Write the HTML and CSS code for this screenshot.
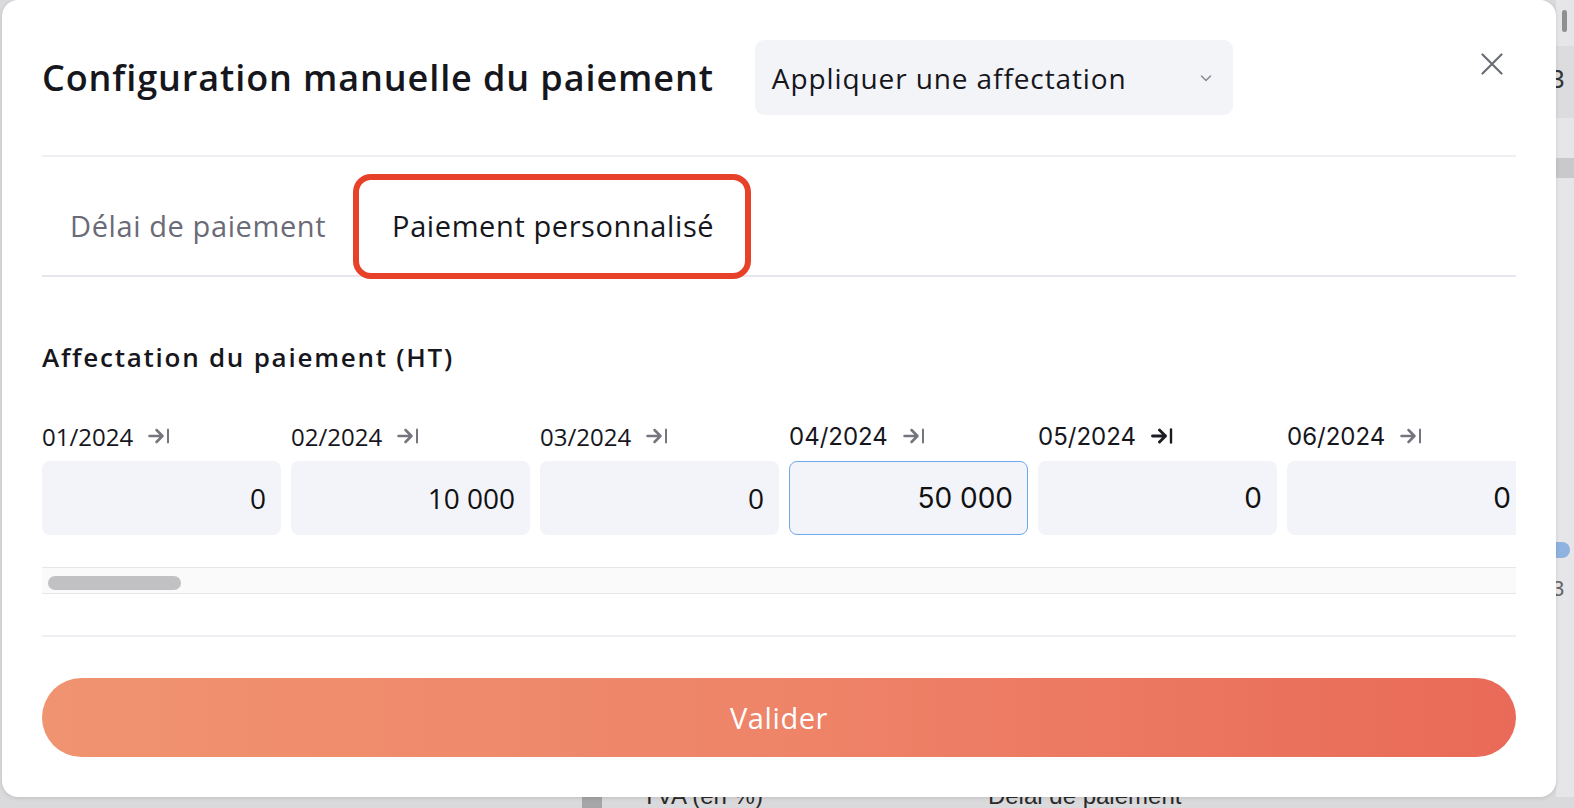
FILE: index.html
```html
<!DOCTYPE html>
<html lang="fr">
<head>
<meta charset="utf-8">
<title>Configuration manuelle du paiement</title>
<link rel="stylesheet" href="styles.css">
</head>
<body>
<div class="page">
  <div class="page-side">
    <div class="side-thumb"></div>
    <div class="side-band"><span>3</span></div>
    <div class="side-band2"></div>
    <div class="side-dot"></div>
    <div class="side-digit">3</div>
  </div>
  <div class="page-bottom">
    <div class="pb-square"></div>
    <span class="pb-label pb-tva">TVA (en %)</span>
    <span class="pb-label pb-delai">Délai de paiement</span>
  </div>
</div>

<div class="modal">
  <div class="modal-header">
    <h1 class="modal-title">Configuration manuelle du paiement</h1>
    <div class="select">
      <span class="select-text">Appliquer une affectation</span>
      <svg class="select-chevron" width="14" height="14" viewBox="0 0 14 14"><polyline points="2.5,5 7,9.5 11.5,5" fill="none" stroke="#8a8d96" stroke-width="1.6" stroke-linecap="round" stroke-linejoin="round"/></svg>
    </div>
    <button class="close" aria-label="Fermer">
      <svg width="22" height="22" viewBox="0 0 22 22"><path d="M1.5 1.5 L20.5 20.5 M20.5 1.5 L1.5 20.5" stroke="#6b6e76" stroke-width="2.2" stroke-linecap="round"/></svg>
    </button>
  </div>
  <div class="divider"></div>

  <div class="tabs">
    <div class="tab">Délai de paiement</div>
    <div class="tab tab-active">Paiement personnalisé</div>
  </div>

  <h2 class="section-title">Affectation du paiement (HT)</h2>

  <div class="months">
    <div class="month">
      <div class="month-label"><span>01/2024</span><svg class="ico" viewBox="0 0 22 16"><path d="M1.5 8 H14.5 M8.5 2 L14.5 8 L8.5 14" fill="none" stroke="currentColor" stroke-width="2.5" stroke-linecap="round" stroke-linejoin="round"/><path d="M20 1.5 V14.5" stroke="currentColor" stroke-width="2" stroke-linecap="round"/></svg></div>
      <div class="month-input">0</div>
    </div>
    <div class="month">
      <div class="month-label"><span>02/2024</span><svg class="ico" viewBox="0 0 22 16"><path d="M1.5 8 H14.5 M8.5 2 L14.5 8 L8.5 14" fill="none" stroke="currentColor" stroke-width="2.5" stroke-linecap="round" stroke-linejoin="round"/><path d="M20 1.5 V14.5" stroke="currentColor" stroke-width="2" stroke-linecap="round"/></svg></div>
      <div class="month-input">10 000</div>
    </div>
    <div class="month">
      <div class="month-label"><span>03/2024</span><svg class="ico" viewBox="0 0 22 16"><path d="M1.5 8 H14.5 M8.5 2 L14.5 8 L8.5 14" fill="none" stroke="currentColor" stroke-width="2.5" stroke-linecap="round" stroke-linejoin="round"/><path d="M20 1.5 V14.5" stroke="currentColor" stroke-width="2" stroke-linecap="round"/></svg></div>
      <div class="month-input">0</div>
    </div>
    <div class="month alt">
      <div class="month-label"><span>04/2024</span><svg class="ico" viewBox="0 0 22 16"><path d="M1.5 8 H14.5 M8.5 2 L14.5 8 L8.5 14" fill="none" stroke="currentColor" stroke-width="2.5" stroke-linecap="round" stroke-linejoin="round"/><path d="M20 1.5 V14.5" stroke="currentColor" stroke-width="2" stroke-linecap="round"/></svg></div>
      <div class="month-input focused">50 000</div>
    </div>
    <div class="month alt">
      <div class="month-label"><span>05/2024</span><svg class="ico ico-dark" viewBox="0 0 22 16"><path d="M1.5 8 H14.5 M8.5 2 L14.5 8 L8.5 14" fill="none" stroke="currentColor" stroke-width="2.9" stroke-linecap="round" stroke-linejoin="round"/><path d="M20 1.5 V14.5" stroke="currentColor" stroke-width="2.4" stroke-linecap="round"/></svg></div>
      <div class="month-input">0</div>
    </div>
    <div class="month alt">
      <div class="month-label"><span>06/2024</span><svg class="ico" viewBox="0 0 22 16"><path d="M1.5 8 H14.5 M8.5 2 L14.5 8 L8.5 14" fill="none" stroke="currentColor" stroke-width="2.5" stroke-linecap="round" stroke-linejoin="round"/><path d="M20 1.5 V14.5" stroke="currentColor" stroke-width="2" stroke-linecap="round"/></svg></div>
      <div class="month-input">0</div>
    </div>
    <div class="month alt">
      <div class="month-label"><span>07/2024</span></div>
      <div class="month-input">0</div>
    </div>
  </div>

  <div class="scrollbar"><div class="scroll-thumb"></div></div>

  <div class="divider divider-bottom"></div>

  <button class="submit">Valider</button>
</div>
</body>
</html>
```
FILE: styles.css
```css
* { box-sizing: border-box; }
html, body { margin: 0; padding: 0; }
body {
  width: 1574px;
  height: 808px;
  overflow: hidden;
  background: #d9d9db;
  font-family: "Open Sans", "DejaVu Sans", sans-serif;
  position: relative;
}

/* underlying page (behind the overlay) */
.page {
  width: 1574px;
  height: 808px;
  display: flex;
  flex-direction: column;
  justify-content: flex-end;
  background: #dadadc;
}
.page-side {
  position: absolute;
  right: 0;
  top: 0;
  width: 18px;
  height: 797px;
  background: #e6e6e8;
}
.side-thumb {
  margin: 10px 0 0 6px;
  width: 5px;
  height: 22px;
  border-radius: 3px;
  background: #8f8f92;
}
.side-band {
  margin-top: 14px;
  height: 72px;
  background: #dcdcde;
  font: 26px "Liberation Sans", sans-serif;
  color: #333;
  padding-top: 18px;
  text-indent: -6px;
  overflow: hidden;
}
.side-band2 {
  margin-top: 40px;
  height: 20px;
  background: #c9c9cc;
}
.side-dot {
  margin: 364px 0 0 0;
  width: 14px;
  height: 16px;
  border-radius: 0 8px 8px 0;
  background: #8fb2e0;
}
.side-digit {
  margin-top: 18px;
  font: 22px "Liberation Sans", sans-serif;
  color: #666;
  text-indent: -4px;
  overflow: hidden;
}
.page-bottom {
  height: 11px;
  position: relative;
  overflow: hidden;
  display: flex;
  align-items: flex-start;
}
.pb-square {
  width: 20px;
  height: 11px;
  margin-left: 582px;
  background: #a6a6a8;
}
.pb-label {
  font: 24px "Liberation Sans", sans-serif;
  color: #2a2a2a;
  line-height: 24px;
  margin-top: -13px;
}
.pb-tva { margin-left: 40px; }
.pb-delai { margin-left: 225px; }

/* modal */
.modal {
  position: absolute;
  left: 2px;
  top: 0;
  width: 1554px;
  height: 797px;
  background: #ffffff;
  border-radius: 16px;
  padding: 40px;
  display: flex;
  flex-direction: column;
  box-shadow: 0 1px 4px rgba(0,0,0,0.12);
  color: #16161d;
}

.modal-header {
  display: flex;
  align-items: center;
  height: 75px;
}
.modal-title {
  margin: 0;
  font-size: 36px;
  font-weight: 600;
  letter-spacing: 0.9px;
  color: #16161d;
  white-space: nowrap;
}
.select {
  margin-left: 41px;
  width: 478px;
  height: 75px;
  background: #f3f4f8;
  border-radius: 9px;
  display: flex;
  align-items: center;
  padding: 0 20px 0 17px;
}
.select-text {
  font-size: 28px;
  font-weight: 400;
  letter-spacing: 0.9px;
  color: #16161d;
  flex: 1;
  white-space: nowrap;
}
.select-chevron { display: block; }
.close {
  margin-left: auto;
  margin-right: 13px;
  align-self: flex-start;
  margin-top: 13px;
  width: 22px;
  height: 22px;
  padding: 0;
  border: 0;
  background: none;
  display: flex;
}

.divider {
  margin-top: 40px;
  height: 2px;
  background: #efeff4;
  flex: none;
}

.tabs {
  margin-top: 20px;
  display: flex;
  height: 100px;
  border-bottom: 2px solid #e6e6ec;
  flex: none;
}
.tab {
  height: 98px;
  line-height: 98px;
  padding: 0 28px;
  font-size: 29px;
  letter-spacing: 0.6px;
  color: #6b6b77;
  white-space: nowrap;
}
.tab-active {
  position: relative;
  padding: 0 38px;
  color: #16161d;
}
.tab-active::after {
  content: "";
  position: absolute;
  left: -1px;
  right: 1px;
  top: -3px;
  bottom: -4px;
  border: 6px solid #e8412a;
  border-radius: 18px;
}

.section-title {
  margin: 65px 0 0 0;
  font-size: 26px;
  line-height: 30px;
  font-weight: 600;
  letter-spacing: 1.75px;
  color: #16161d;
}

.months {
  margin-top: 52px;
  display: flex;
  gap: 10px;
  overflow: hidden;
  flex: none;
}
.month {
  flex: 0 0 239px;
  display: flex;
  flex-direction: column;
  gap: 13px;
}
.month-label {
  height: 24px;
  display: flex;
  align-items: center;
  gap: 15px;
  font-size: 24px;
  color: #16161d;
}
.alt .month-label, .alt .month-input {
  font-family: "Inter", "Liberation Sans", sans-serif;
}
.ico {
  width: 22px;
  height: 16px;
  color: #74757d;
  flex: none;
}
.ico-dark { color: #1c1c22; }
.month-input {
  height: 74px;
  background: #f3f4f9;
  border-radius: 8px;
  display: flex;
  align-items: center;
  justify-content: flex-end;
  padding-right: 14px;
  font-size: 28px;
  color: #111;
  border: 1.5px solid transparent;
}
.month-input.focused {
  border-color: #6ea8ee;
}

.scrollbar {
  margin-top: 32px;
  height: 27px;
  background: #fafafa;
  border-top: 1px solid #e6e6e6;
  border-bottom: 1px solid #e6e6e6;
  padding: 8px 0 0 6px;
  flex: none;
}
.scroll-thumb {
  width: 133px;
  height: 14px;
  border-radius: 7px;
  background: #c1c1c3;
}

.divider-bottom {
  margin-top: 41px;
}

.submit {
  margin-top: 41px;
  height: 79px;
  border: 0;
  border-radius: 40px;
  background: linear-gradient(90deg, #f09370 0%, #ee8468 50%, #e96a58 100%);
  color: #ffffff;
  font-family: "Open Sans", sans-serif;
  font-size: 29px;
  font-weight: 500;
  letter-spacing: 0.6px;
  flex: none;
}
```
